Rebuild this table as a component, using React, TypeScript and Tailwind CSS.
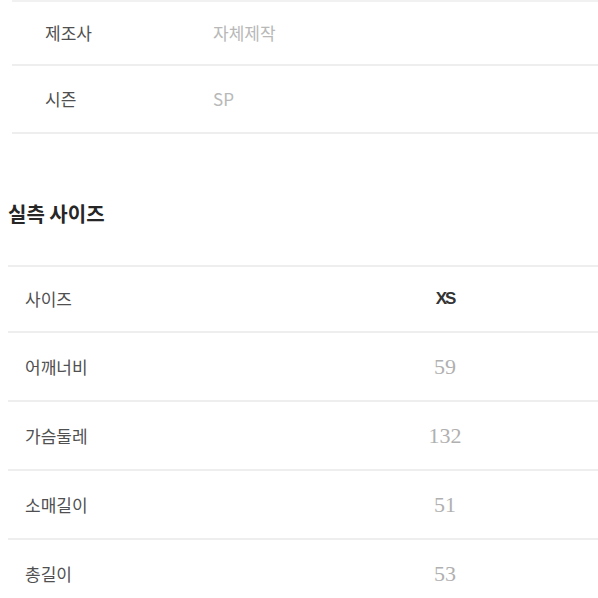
const KR = "font-['Noto_Sans_CJK_KR','Noto_Sans',sans-serif]"

const infoRows = [
  { label: '제조사', value: '자체제작' },
  { label: '시즌', value: 'SP' },
]

const sizeRows = [
  { label: '사이즈', value: 'XS', head: true },
  { label: '어깨너비', value: '59' },
  { label: '가슴둘레', value: '132' },
  { label: '소매길이', value: '51' },
  { label: '총길이', value: '53' },
]

export default function App() {
  return (
    <div className={`h-[598px] w-[598px] overflow-hidden bg-white ${KR}`}>
      <div className="ml-[12px] border-t-2 border-[#f1f1f1]">
        {infoRows.map((row, i) => (
          <div
            key={row.label}
            className={`flex items-center border-b-2 border-[#eeeeee] ${i === 0 ? 'h-[64px]' : 'h-[68px]'}`}
          >
            <span className="w-[201px] pl-[33px] text-[17px] text-[#505050]">{row.label}</span>
            <span className="text-[17px] text-[#b8b8b8]">{row.value}</span>
          </div>
        ))}
      </div>

      <h2 className="mt-[70px] pl-[8px] text-[20px] font-bold leading-none text-[#262626]">실측 사이즈</h2>

      <div className="ml-[8px] mt-[41px] border-t-2 border-[#eeeeee]">
        {sizeRows.map((row, i) => (
          <div
            key={row.label}
            className={`grid grid-cols-[284px_1fr] items-center border-b-2 border-[#eeeeee] ${i === 0 ? 'h-[66px]' : 'h-[69px]'}`}
          >
            <span className="pl-[17px] text-[17px] text-[#505050]">{row.label}</span>
            <span
              className={
                row.head
                  ? "w-[306px] text-center font-['Liberation_Sans',sans-serif] text-[17px] font-bold tracking-[-2px] text-[#333]"
                  : "w-[306px] text-center font-['Liberation_Serif',serif] text-[22px] text-[#b0b0b0]"
              }
            >
              {row.value}
            </span>
          </div>
        ))}
      </div>
    </div>
  )
}
